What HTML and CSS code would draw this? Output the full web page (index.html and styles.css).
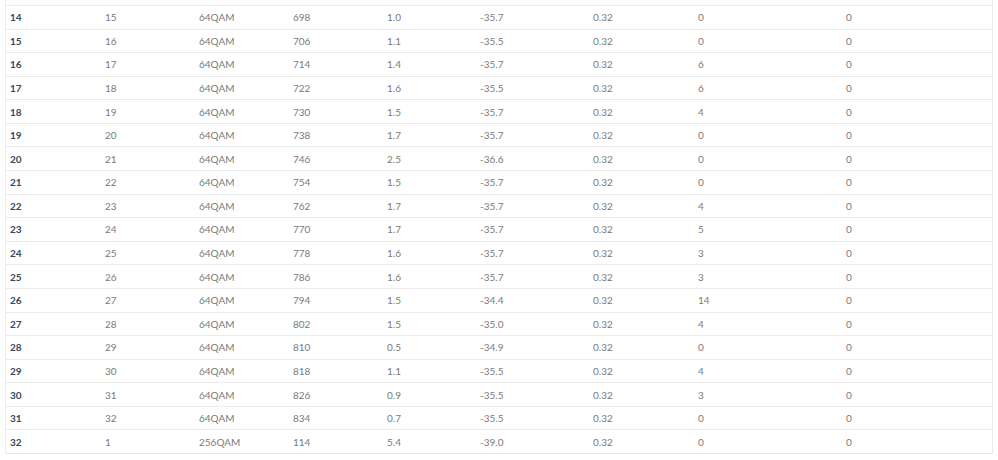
FILE: index.html
```html
<!DOCTYPE html>
<html>
<head>
<meta charset="utf-8">
<link rel="stylesheet" href="styles.css">
</head>
<body>
<div class="table">
<div class="row"><span class="id">14</span><span>15</span><span>64QAM</span><span>698</span><span>1.0</span><span>-35.7</span><span>0.32</span><span>0</span><span>0</span></div>
<div class="row"><span class="id">15</span><span>16</span><span>64QAM</span><span>706</span><span>1.1</span><span>-35.5</span><span>0.32</span><span>0</span><span>0</span></div>
<div class="row"><span class="id">16</span><span>17</span><span>64QAM</span><span>714</span><span>1.4</span><span>-35.7</span><span>0.32</span><span>6</span><span>0</span></div>
<div class="row"><span class="id">17</span><span>18</span><span>64QAM</span><span>722</span><span>1.6</span><span>-35.5</span><span>0.32</span><span>6</span><span>0</span></div>
<div class="row"><span class="id">18</span><span>19</span><span>64QAM</span><span>730</span><span>1.5</span><span>-35.7</span><span>0.32</span><span>4</span><span>0</span></div>
<div class="row"><span class="id">19</span><span>20</span><span>64QAM</span><span>738</span><span>1.7</span><span>-35.7</span><span>0.32</span><span>0</span><span>0</span></div>
<div class="row"><span class="id">20</span><span>21</span><span>64QAM</span><span>746</span><span>2.5</span><span>-36.6</span><span>0.32</span><span>0</span><span>0</span></div>
<div class="row"><span class="id">21</span><span>22</span><span>64QAM</span><span>754</span><span>1.5</span><span>-35.7</span><span>0.32</span><span>0</span><span>0</span></div>
<div class="row"><span class="id">22</span><span>23</span><span>64QAM</span><span>762</span><span>1.7</span><span>-35.7</span><span>0.32</span><span>4</span><span>0</span></div>
<div class="row"><span class="id">23</span><span>24</span><span>64QAM</span><span>770</span><span>1.7</span><span>-35.7</span><span>0.32</span><span>5</span><span>0</span></div>
<div class="row"><span class="id">24</span><span>25</span><span>64QAM</span><span>778</span><span>1.6</span><span>-35.7</span><span>0.32</span><span>3</span><span>0</span></div>
<div class="row"><span class="id">25</span><span>26</span><span>64QAM</span><span>786</span><span>1.6</span><span>-35.7</span><span>0.32</span><span>3</span><span>0</span></div>
<div class="row"><span class="id">26</span><span>27</span><span>64QAM</span><span>794</span><span>1.5</span><span>-34.4</span><span>0.32</span><span>14</span><span>0</span></div>
<div class="row"><span class="id">27</span><span>28</span><span>64QAM</span><span>802</span><span>1.5</span><span>-35.0</span><span>0.32</span><span>4</span><span>0</span></div>
<div class="row"><span class="id">28</span><span>29</span><span>64QAM</span><span>810</span><span>0.5</span><span>-34.9</span><span>0.32</span><span>0</span><span>0</span></div>
<div class="row"><span class="id">29</span><span>30</span><span>64QAM</span><span>818</span><span>1.1</span><span>-35.5</span><span>0.32</span><span>4</span><span>0</span></div>
<div class="row"><span class="id">30</span><span>31</span><span>64QAM</span><span>826</span><span>0.9</span><span>-35.5</span><span>0.32</span><span>3</span><span>0</span></div>
<div class="row"><span class="id">31</span><span>32</span><span>64QAM</span><span>834</span><span>0.7</span><span>-35.5</span><span>0.32</span><span>0</span><span>0</span></div>
<div class="row"><span class="id">32</span><span>1</span><span>256QAM</span><span>114</span><span>5.4</span><span>-39.0</span><span>0.32</span><span>0</span><span>0</span></div>
</div>
</body>
</html>
```
FILE: styles.css
```css
html, body {
  margin: 0;
  padding: 0;
  background: #fff;
}
body {
  font-family: Lato, "Liberation Sans", sans-serif;
  font-size: 10px;
  color: #7a7a7a;
}
.table {
  box-sizing: border-box;
  width: 988px;
  margin-left: 5px;
  padding-top: 5px;
  border-left: 1px solid #ececec;
  border-right: 1px solid #ececec;
  border-bottom: 1px solid #e6e6e6;
}
.row {
  box-sizing: border-box;
  height: 23.58px;
  display: grid;
  grid-template-columns: 95px 94px 94px 94px 93px 113px 105px 148px 1fr;
  align-items: center;
  border-top: 1px solid #ebebeb;
}
.row span {
  padding-left: 4px;
  white-space: nowrap;
}
.row .id {
  font-weight: 700;
  color: #34495e;
}
```
